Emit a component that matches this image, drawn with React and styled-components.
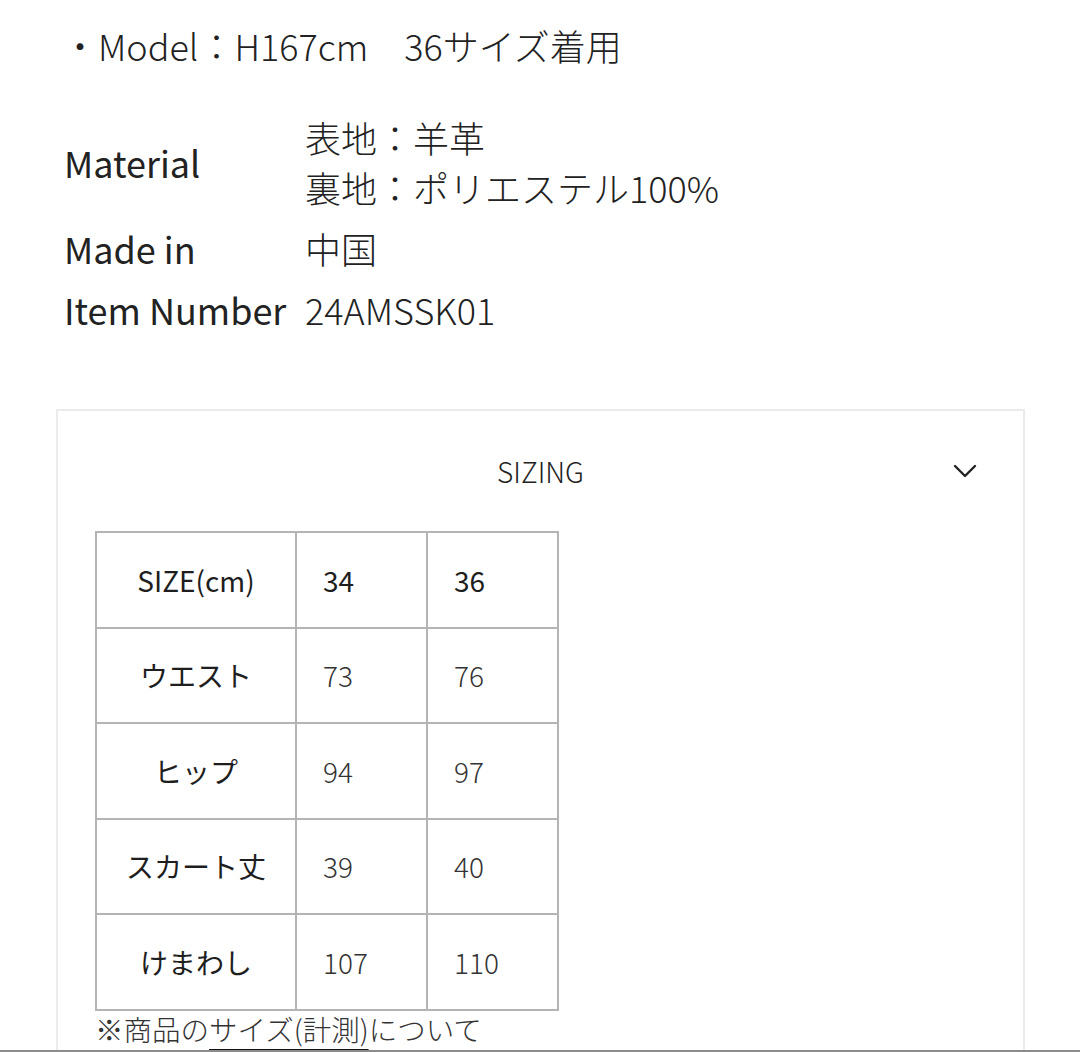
import React from 'react';
import styled, { createGlobalStyle } from 'styled-components';

const GlobalStyle = createGlobalStyle`
  html, body {
    margin: 0;
    padding: 0;
    background: #fff;
  }
  body {
    font-family: "Noto Sans CJK JP", "Noto Sans", sans-serif;
    color: #222;
    height: 1052px;
    overflow: hidden;
  }
`;

const Page = styled.div`
  width: 1080px;
  padding-top: 20px;
`;

const Details = styled.div`
  padding-left: 64px;
  font-size: 36px;
  line-height: 50px;
`;

const ModelLine = styled.div`
  margin-left: -2px;
  font-weight: 300;
  margin-bottom: 42px;
`;

const Specs = styled.dl`
  display: grid;
  grid-template-columns: 241px 1fr;
  row-gap: 11px;
  align-items: center;
  margin: 0;
`;

const Label = styled.dt`
  font-weight: 400;
  margin: 0;
`;

const Value = styled.dd`
  font-weight: 300;
  margin: 0;
`;

const Panel = styled.section`
  margin: 75px 55px 0 56px;
  border: 2px solid #ebebeb;
  border-bottom: none;
  padding: 0 0 40px 37px;
`;

const PanelHeader = styled.div`
  display: flex;
  align-items: center;
  justify-content: center;
  position: relative;
  height: 120px;
  margin-left: -37px;
  font-size: 28px;
  font-weight: 300;
`;

const Chevron = styled.svg`
  position: absolute;
  right: 46px;
  top: 53px;
`;

const SizeTable = styled.table`
  border-collapse: collapse;
  font-size: 28px;
`;

const Cell = styled.td`
  border: 2px solid #b4b4b4;
  height: 93.5px;
  padding: 0 0 0 ${p => (p.$first ? 0 : 26)}px;
  width: ${p => (p.$first ? 198 : 103)}px;
  text-align: ${p => (p.$first ? 'center' : 'left')};
  font-weight: ${p => (p.$first || p.$head ? 400 : 300)};
  color: ${p => (p.$first || p.$head ? '#1e1e1e' : '#333')};
`;

const Note = styled.p`
  margin: 0;
  font-size: 28.5px;
  line-height: 36px;
  font-weight: 300;
  color: #333;
`;

const Link = styled.span`
  text-decoration: underline;
  text-decoration-color: #111;
  text-decoration-thickness: 3px;
  text-underline-offset: 8px;
`;

const BottomEdge = styled.div`
  position: fixed;
  left: 0;
  right: 0;
  bottom: 0;
  height: 2px;
  background: #8c8c8c;
`;

const rows = [
  ['ウエスト', '73', '76'],
  ['ヒップ', '94', '97'],
  ['スカート丈', '39', '40'],
  ['けまわし', '107', '110'],
];

export default function App() {
  return (
    <Page>
      <GlobalStyle />
      <Details>
        <ModelLine>・Model：H167cm　36サイズ着用</ModelLine>
        <Specs>
          <Label>Material</Label>
          <Value>
            表地：羊革
            <br />
            裏地：ポリエステル100%
          </Value>
          <Label>Made in</Label>
          <Value>中国</Value>
          <Label>Item Number</Label>
          <Value>24AMSSK01</Value>
        </Specs>
      </Details>

      <Panel>
        <PanelHeader>
          SIZING
          <Chevron width="24" height="14" viewBox="0 0 24 14" fill="none">
            <path d="M2 2 L12 12 L22 2" stroke="#222" strokeWidth="2.4" strokeLinecap="round" strokeLinejoin="round" />
          </Chevron>
        </PanelHeader>
        <SizeTable>
          <tbody>
            <tr>
              <Cell $first>SIZE(cm)</Cell>
              <Cell $head>34</Cell>
              <Cell $head>36</Cell>
            </tr>
            {rows.map(r => (
              <tr key={r[0]}>
                <Cell $first>{r[0]}</Cell>
                <Cell>{r[1]}</Cell>
                <Cell>{r[2]}</Cell>
              </tr>
            ))}
          </tbody>
        </SizeTable>
        <Note>
          ※商品の<Link>サイズ(計測)</Link>について
        </Note>
      </Panel>
      <BottomEdge />
    </Page>
  );
}
